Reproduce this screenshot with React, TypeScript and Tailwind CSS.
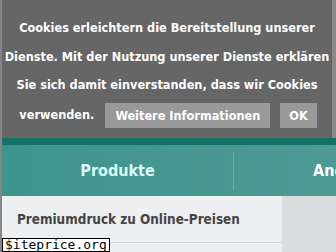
import { FC } from "react";

const font = { fontFamily: '"DejaVu Sans Condensed", "DejaVu Sans", Verdana, sans-serif' };

const App: FC = () => {
  return (
    <div
      className="relative w-[336px] h-[252px] overflow-hidden bg-[#dcdddf] border-l-2 border-[#858585]"
      style={font}
    >
      {/* cookie banner */}
      <div className="h-[138px] bg-[#666666] pt-[14px] text-center text-white font-bold text-[12.6px] leading-[28.6px] whitespace-nowrap border-r-[4px] border-[#8a8a8a]">
        <div>Cookies erleichtern die Bereitstellung unserer</div>
        <div>Dienste. Mit der Nutzung unserer Dienste erklären</div>
        <div>Sie sich damit einverstanden, dass wir Cookies</div>
        <div className="flex items-center justify-center gap-[10px] mt-[1px] pl-[2px]">
          <span className="mr-[1px]">verwenden.</span>
          <span className="bg-[#999999] h-[25px] leading-[25px] px-[10px]">Weitere Informationen</span>
          <span className="bg-[#999999] h-[25px] leading-[25px] px-[9px]">OK</span>
        </div>
      </div>

      {/* nav */}
      <div className="h-[7px] bg-[#137268]" />
      <div className="h-[51px] flex items-center overflow-hidden bg-gradient-to-r from-[#3e948b] to-[#4d9a93]">
        <div className="w-[231px] shrink-0 text-center text-[#dafcf9] font-bold text-[16px]">Produkte</div>
        <div className="w-px shrink-0 h-[38px] bg-[#6eaea6]" />
        <div className="ml-[79px] shrink-0 text-white font-bold text-[16px] whitespace-nowrap">Angebote</div>
      </div>

      {/* content */}
      <div className="flex h-[56px]">
        <div className="w-[280px] shrink-0 bg-[#eeeff1] pl-[15px] pt-[14px]">
          <div className="text-[#444444] font-bold text-[13.4px] leading-[20px] whitespace-nowrap">Premiumdruck zu Online-Preisen</div>
          <div className="mt-[12px] h-px bg-[#d4d5d7]" />
        </div>
        <div className="flex-1 bg-[#dcdddf]" />
      </div>

      {/* watermark */}
      <div
        className="absolute left-0 bottom-0 bg-white border border-black px-[2px] text-[13px] leading-[12px] text-black"
        style={{ fontFamily: '"DejaVu Sans Mono", monospace' }}
      >
        $iteprice.org
      </div>
    </div>
  );
};

export default App;
